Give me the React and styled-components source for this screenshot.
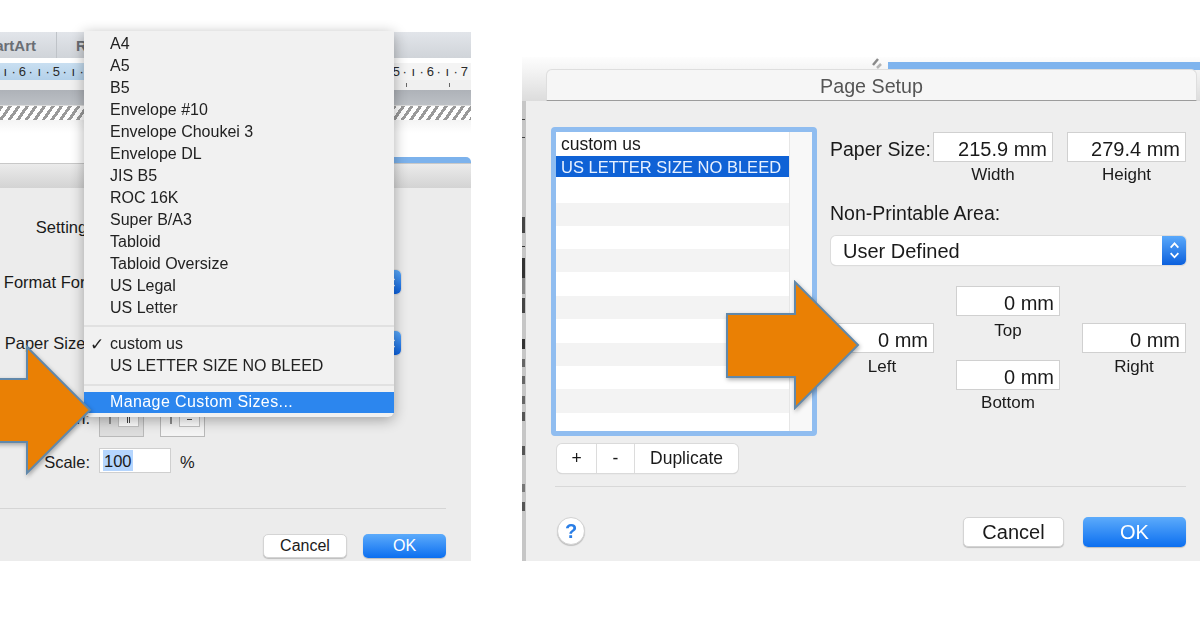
import React from 'react'
import styled, { createGlobalStyle, css } from 'styled-components'

const GlobalStyle = createGlobalStyle`
  html, body { margin: 0; padding: 0; background: #fff; }
  body { font-family: "Liberation Sans", Arial, sans-serif; color: #1a1a1a; }
  * { box-sizing: border-box; }
`

const paperSizes = ['A4', 'A5', 'B5', 'Envelope #10', 'Envelope Choukei 3', 'Envelope DL', 'JIS B5', 'ROC 16K', 'Super B/A3', 'Tabloid', 'Tabloid Oversize', 'US Legal', 'US Letter']
const listRows = [24, 21, 26, 23, 23, 23, 24, 23, 24, 23, 23, 24, 18]
// bits of the document peeking out behind the sheet: [gap above, height, colour]
const edgeMarks = [[18, 1, '#444'], [17, 1, '#444'], [79, 16, '#444'], [13, 1, '#333'], [11, 20, '#333'], [0, 16, '#888'], [4, 15, '#444'], [26, 10, '#333'], [10, 8, '#666'], [9, 8, '#666'], [12, 8, '#666'], [8, 9, '#555'], [25, 9, '#555'], [29, 8, '#777'], [10, 9, '#555']]

const softEdges = css`
  filter: blur(0.5px);
`

const Page = styled.div`
  display: flex;
  align-items: flex-start;
  width: 1200px;
  height: 630px;
  overflow: hidden;
  background: #fff;
`

const LeftShot = styled.section`
  ${softEdges}
  position: relative;
  display: flex;
  flex-direction: column;
  flex: none;
  width: 471px;
  height: 529px;
  margin-top: 32px;
`

const Toolbar = styled.div`
  display: flex;
  height: 26px;
  background: linear-gradient(#e2e5ea, #d0d4d9);
  color: #6a6e74;
  font-size: 15px;
  font-weight: 700;
`

const ToolTab = styled.div`
  display: flex;
  align-items: center;
  justify-content: ${p => p.$start ? 'flex-start' : 'flex-end'};
  flex: none;
  width: ${p => p.$w}px;
  padding: 0 ${p => p.$end || 0}px 0 ${p => p.$start || 0}px;
  white-space: nowrap;
  overflow: hidden;
  border-right: 1px solid #bfc3c8;
`

const Ruler = styled.div`
  display: flex;
  justify-content: space-between;
  height: 17px;
  margin-top: 5px;
  background: #f4f4f4;
`

const RulerPart = styled.div`
  display: flex;
  flex: none;
  align-items: center;
  width: ${p => p.$w}px;
  padding-left: ${p => p.$pad}px;
  background: ${p => p.$blue ? 'linear-gradient(#c9dff1, #b4d1ea)' : 'transparent'};
`

const RulerMark = styled.span`
  flex: none;
  width: 8.5px;
  text-align: center;
  font-size: 13px;
  color: #2a2a2a;
`

const TickRow = styled.div`
  display: flex;
  justify-content: flex-end;
  align-items: center;
  gap: 42px;
  height: 10px;
  padding-right: 21px;
  background: #f0f0f0;
`

const Tick = styled.span`
  width: 1px;
  height: 4px;
  background: #666;
`

const GreyBand = styled.div`
  height: 16px;
  background: linear-gradient(#aeb2b8, #bcc0c5);
  border-bottom: 1px solid #dcdcdc;
`

const Hatch = styled.div`
  height: 14px;
  background: repeating-linear-gradient(125deg, #9a9a9a 0 3px, #fff 3px 7px);
`

const WhiteGap = styled.div`
  display: flex;
  justify-content: flex-end;
  align-items: flex-end;
  height: 43px;
  background: linear-gradient(#f4f4f4, #fff 30%);
`

const BlueEdge = styled.div`
  width: 77px;
  height: 6px;
  background: #7cb2ec;
  border-top-right-radius: 5px;
`

const DialogHead = styled.div`
  height: 25px;
  background: linear-gradient(#ebebeb, #d3d3d3);
  border-top: 1px solid #c8c8c8;
`

const DialogBody = styled.div`
  flex: 1;
  padding-top: 27px;
  background: #ececec;
`

const FormRow = styled.div`
  display: flex;
  align-items: center;
  height: ${p => p.$h || 24}px;
  margin-top: ${p => p.$top || 0}px;
  font-size: 16.5px;
`

const RowLabel = styled.label`
  flex: none;
  width: ${p => p.$w || 90}px;
  margin-right: 9px;
  padding-top: ${p => p.$drop || 1}px;
  text-align: right;
  white-space: nowrap;
`

const OrientLabel = styled(RowLabel)`
  align-self: flex-start;
  margin-top: 3px;
`

const OrientButton = styled.div`
  display: flex;
  align-items: flex-start;
  gap: 7px;
  width: 45px;
  height: 32px;
  margin-right: 16px;
  padding-left: 9px;
  border: 1px solid #b9b9b9;
  background: ${p => p.$pressed ? '#dddddd' : '#f4f4f4'};
`

const PaperNub = styled.span`
  width: 2px;
  height: 7px;
  margin-top: 11px;
  background: #8d8d8d;
`

const PaperIcon = styled.span`
  display: flex;
  justify-content: center;
  align-items: flex-end;
  gap: 1px;
  width: 21px;
  height: 21px;
  padding-bottom: 3px;
  border: 1px solid #c2c2c2;
  border-top: 0;
  background: #fff;
`

const PaperLine = styled.span`
  width: ${p => p.$w}px;
  height: ${p => p.$h}px;
  margin-bottom: ${p => p.$up || 0}px;
  background: #444;
`

const ScaleInput = styled.div`
  display: flex;
  align-items: center;
  flex: none;
  width: 72px;
  height: 25px;
  padding-left: 3px;
  border: 1px solid #cfcfcf;
  background: #fff;
`

const Selected = styled.span`
  padding: 2px 1px 0;
  background: #b5d5fd;
`

const Unit = styled.span`
  margin-left: 9px;
  padding-top: 3px;
`

const LeftDivider = styled.div`
  height: 1px;
  margin: 35px 25px 0 0;
  background: #d5d5d5;
`

const DialogFooter = styled.div`
  display: flex;
  justify-content: flex-end;
  gap: ${p => p.$gap}px;
  margin-top: ${p => p.$top}px;
  padding-right: ${p => p.$pad}px;
`

const PushButton = styled.button`
  display: flex;
  align-items: center;
  justify-content: center;
  width: ${p => p.$w}px;
  height: ${p => p.$h}px;
  padding: 0;
  border-radius: 5px;
  border: ${p => p.$primary ? '0' : '1px solid #d4d4d4'};
  background: ${p => p.$primary ? 'linear-gradient(#5cabfb, #0c6ff0)' : '#fff'};
  color: ${p => p.$primary ? '#fff' : '#1a1a1a'};
  box-shadow: 0 1px 1px rgba(0, 0, 0, 0.2);
  font: inherit;
  font-size: ${p => p.$size}px;
`

const SelectBox = styled.div`
  display: flex;
  align-items: center;
  justify-content: space-between;
  flex: none;
  width: ${p => p.$w}px;
  height: ${p => p.$h}px;
  margin-left: ${p => p.$left || 0}px;
  padding-left: 12px;
  border-radius: 5px;
  background: #fff;
  box-shadow: 0 0 0 1px #dcdcdc, 0 1px 1px rgba(0, 0, 0, 0.15);
  font-size: 20px;
`

const SelectText = styled.span`
  padding-top: 2px;
`

const Stepper = styled.span`
  display: flex;
  align-items: center;
  justify-content: center;
  flex: none;
  width: ${p => p.$w}px;
  height: 100%;
  border-radius: 0 5px 5px 0;
  background: linear-gradient(#5aa9fb, #0b60dd);
`

const Menu = styled.div`
  position: absolute;
  top: -1px;
  left: 84px;
  width: 310px;
  padding: 2px 0 4px;
  border-radius: 0 0 6px 6px;
  background: #f1f1f1;
  box-shadow: 0 3px 14px rgba(0, 0, 0, 0.32);
  font-size: 16px;
`

const MenuItem = styled.div`
  display: flex;
  align-items: center;
  height: ${p => p.$h || 22}px;
  padding-left: ${p => p.$checked ? 6 : 26}px;
  background: ${p => p.$active ? '#2c86ee' : 'transparent'};
  color: ${p => p.$active ? '#fff' : '#222'};
  letter-spacing: ${p => p.$active ? 0.4 : 0}px;
  white-space: nowrap;
`

const ManageText = styled.span`
  margin-top: -2px;
`

const CheckMark = styled.span`
  flex: none;
  width: 20px;
  font-family: "DejaVu Sans", sans-serif;
  font-size: 17px;
`

const MenuSeparator = styled.div`
  height: 2px;
  margin: ${p => p.$before}px 0 ${p => p.$after}px;
  background: #e1e1e1;
`

const ArrowSvg = styled.svg`
  position: absolute;
  top: ${p => p.$top}px;
  left: ${p => p.$left}px;
  filter: drop-shadow(1px 2px 2px rgba(0, 0, 0, 0.3));
`

const RightShot = styled.section`
  ${softEdges}
  display: flex;
  flex-direction: column;
  position: relative;
  flex: none;
  width: 678px;
  height: 504px;
  margin: 57px 0 0 51px;
`

const TitleArea = styled.div`
  position: relative;
  flex: none;
  height: 44px;
  padding: 12px 3px 0 24px;
  background: linear-gradient(#fdfdfd, #f4f4f4 30%, #dcdcdc);
`

const BlueStrip = styled.div`
  position: absolute;
  top: 5px;
  left: 366px;
  right: 0;
  height: 8px;
  background: #7fb4ee;
`

const Curl = styled.svg`
  position: absolute;
  top: 1px;
  left: 350px;
`

const TitleBar = styled.div`
  position: relative;
  display: flex;
  align-items: center;
  justify-content: center;
  height: 32px;
  padding-top: 2px;
  border: 1px solid #dedede;
  border-bottom: 1px solid #9c9c9c;
  border-radius: 6px 6px 0 0;
  background: #f6f6f6;
  color: #555;
  font-size: 19.7px;
`

const SheetRow = styled.div`
  display: flex;
  flex: 1;
`

const EdgeStrip = styled.div`
  display: flex;
  flex-direction: column;
  flex: none;
  width: 4px;
  background: #c6c6c6;
`

const EdgeMark = styled.span`
  width: 3px;
  height: ${p => p.$h}px;
  margin-top: ${p => p.$gap}px;
  background: ${p => p.$color};
`

const Sheet = styled.div`
  flex: 1;
  display: flex;
  flex-direction: column;
  padding: 26px 14px 14px 25px;
  background: #eeeeee;
`

const Upper = styled.div`
  display: flex;
  gap: 13px;
`

const ListColumn = styled.div`
  flex: none;
  width: 266px;
`

const ListFrame = styled.div`
  display: flex;
  height: 309px;
  border: 5px solid #90bdf0;
  border-radius: 4px;
  background: #fff;
`

const ListRows = styled.div`
  flex: none;
  display: flex;
  flex-direction: column;
  width: 233px;
`

const ListRow = styled.div`
  display: flex;
  align-items: center;
  height: ${p => p.$h}px;
  padding: ${p => p.$selected ? 2 : 0}px 0 0 5px;
  background: ${p => p.$selected ? '#0f62d6' : p.$striped ? '#f3f3f3' : '#fff'};
  color: ${p => p.$selected ? '#e8f1ff' : '#1a1a1a'};
  font-size: ${p => p.$selected ? 16.5 : 17.5}px;
  white-space: nowrap;
`

const ScrollTrack = styled.div`
  flex: 1;
  border-left: 1px solid #e6e6e6;
  background: #f8f8f8;
`

const Segmented = styled.div`
  display: flex;
  width: 181px;
  height: 29px;
  margin: 8px 0 0 6px;
  border-radius: 5px;
  background: #fff;
  box-shadow: 0 0 0 1px #dadada, 0 1px 1px rgba(0, 0, 0, 0.2);
  font-size: 17.5px;
`

const Segment = styled.div`
  display: flex;
  align-items: center;
  justify-content: center;
  width: ${p => p.$w}px;
  border-right: ${p => p.$last ? '0' : '1px solid #dcdcdc'};
`

const SetupForm = styled.div`
  flex: none;
  width: 356px;
  padding-top: 5px;
`

const PaperRow = styled.div`
  display: flex;
  gap: 14px;
`

const PaperLabel = styled.div`
  flex: none;
  width: 103px;
  height: 30px;
  margin-right: -14px;
  line-height: 34px;
  font-size: 19.5px;
  white-space: nowrap;
`

const FieldColumn = styled.div`
  flex: none;
  width: ${p => p.$w}px;
  padding-top: ${p => p.$top || 0}px;
`

const ValueField = styled.div`
  height: 30px;
  margin-top: ${p => p.$top || 0}px;
  padding-right: 5px;
  border: 1px solid #d0d0d0;
  background: #fff;
  text-align: right;
  line-height: 32px;
  font-size: 20px;
`

const Caption = styled.div`
  height: ${p => p.$h || 24}px;
  line-height: ${p => (p.$h || 24) + 2}px;
  text-align: center;
  font-size: 17px;
`

const SectionLabel = styled.div`
  height: 22px;
  margin: 16px 0 12px;
  line-height: 22px;
  font-size: 19.5px;
`

const MarginGrid = styled.div`
  display: flex;
  gap: 22px;
  margin-top: 21px;
`

const SheetDivider = styled.div`
  height: 1px;
  margin: 13px 0 0 4px;
  background: #d8d8d8;
`

const FooterRow = styled.div`
  display: flex;
  justify-content: space-between;
  margin: 30px 0 0 6px;
`

const HelpButton = styled.div`
  display: flex;
  align-items: center;
  justify-content: center;
  width: 28px;
  height: 28px;
  border-radius: 50%;
  border: 1px solid #d2d2d2;
  background: #fff;
  box-shadow: 0 1px 1px rgba(0, 0, 0, 0.2);
  color: #2a7ee6;
  font-size: 20px;
  font-weight: 700;
`

const FooterButtons = styled.div`
  display: flex;
  gap: 19px;
`

function StepperChevrons({ size }) {
  return (
    <svg width={size} height={size * 1.7} viewBox="0 0 10 17" fill="none" stroke="#fff" strokeWidth="1.6">
      <path d="M1.5 6 5 2.2 8.5 6" />
      <path d="M1.5 11 5 14.8 8.5 11" />
    </svg>
  )
}

function Arrow({ top, left }) {
  return (
    <ArrowSvg $top={top} $left={left} width="135" height="130" viewBox="-2 -2 135 130">
      <path d="M0 32H68V0L131 63 68 126V95H0Z" fill="#ea8004" stroke="#6188aa" strokeWidth="2" />
    </ArrowSvg>
  )
}

function LeftPanel() {
  return (
    <LeftShot>
      <Toolbar>
        <ToolTab $w={57} $end={20}>SmartArt</ToolTab>
        <ToolTab $w={90} $start={19}>Review</ToolTab>
      </Toolbar>
      <Ruler>
        <RulerPart $blue $w={84} $pad={1}>
          {['ı', '·', '6', '·', 'ı', '·', '5', '·', 'ı', '·'].map((m, i) => <RulerMark key={i}>{m}</RulerMark>)}
        </RulerPart>
        <RulerPart $w={79} $pad={0}>
          {['5', '·', 'ı', '·', '6', '·', 'ı', '·', '7'].map((m, i) => <RulerMark key={i}>{m}</RulerMark>)}
        </RulerPart>
      </Ruler>
      <TickRow><Tick /><Tick /></TickRow>
      <GreyBand />
      <Hatch />
      <WhiteGap><BlueEdge /></WhiteGap>
      <DialogHead />
      <DialogBody>
        <FormRow><RowLabel $w={100}>Settings:</RowLabel></FormRow>
        <FormRow $top={31}>
          <RowLabel>Format For:</RowLabel>
          <SelectBox $w={302} $h={24}><span /><Stepper $w={20}><StepperChevrons size={10} /></Stepper></SelectBox>
        </FormRow>
        <FormRow $top={37}>
          <RowLabel>Paper Size:</RowLabel>
          <SelectBox $w={302} $h={24}><span /><Stepper $w={20}><StepperChevrons size={10} /></Stepper></SelectBox>
        </FormRow>
        <FormRow $top={50} $h={32}>
          <OrientLabel>Orientation:</OrientLabel>
          <OrientButton $pressed>
            <PaperNub />
            <PaperIcon><PaperLine $w={1} $h={7} /><PaperLine $w={1} $h={7} /></PaperIcon>
          </OrientButton>
          <OrientButton>
            <PaperNub />
            <PaperIcon><PaperLine $w={5} $h={1} $up={3} /></PaperIcon>
          </OrientButton>
        </FormRow>
        <FormRow $top={11} $h={25}>
          <RowLabel $drop={3}>Scale:</RowLabel>
          <ScaleInput><Selected>100</Selected></ScaleInput>
          <Unit>%</Unit>
        </FormRow>
        <LeftDivider />
        <DialogFooter $gap={16} $top={25} $pad={25}>
          <PushButton $w={84} $h={24} $size={16}>Cancel</PushButton>
          <PushButton $primary $w={83} $h={24} $size={16}>OK</PushButton>
        </DialogFooter>
      </DialogBody>

      <Menu>
        {paperSizes.map(size => <MenuItem key={size}>{size}</MenuItem>)}
        <MenuSeparator $before={6} $after={6} />
        <MenuItem $checked><CheckMark>✓</CheckMark>custom us</MenuItem>
        <MenuItem>US LETTER SIZE NO BLEED</MenuItem>
        <MenuSeparator $before={7} $after={6} />
        <MenuItem $active $h={21}><ManageText>Manage Custom Sizes...</ManageText></MenuItem>
      </Menu>
      <Arrow top={313} left={-43} />
    </LeftShot>
  )
}

function RightPanel() {
  return (
    <RightShot>
      <TitleArea>
        <BlueStrip />
        <Curl width="12" height="12" viewBox="0 0 12 12" fill="none">
          <path d="M1 7 6 1" stroke="#8a8a8a" strokeWidth="2.5" />
          <path d="M5 10 9 6" stroke="#b5b5b5" strokeWidth="2.5" />
        </Curl>
        <TitleBar>Page Setup</TitleBar>
      </TitleArea>
      <SheetRow>
        <EdgeStrip>
          {edgeMarks.map(([gap, h, color], i) => <EdgeMark key={i} $gap={gap} $h={h} $color={color} />)}
        </EdgeStrip>
        <Sheet>
          <Upper>
            <ListColumn>
              <ListFrame>
                <ListRows>
                  {listRows.map((h, i) => (
                    <ListRow key={i} $h={h} $selected={i === 1} $striped={i > 2 && i % 2 === 1}>
                      {i === 0 && 'custom us'}
                      {i === 1 && 'US LETTER SIZE NO BLEED'}
                    </ListRow>
                  ))}
                </ListRows>
                <ScrollTrack />
              </ListFrame>
              <Segmented>
                <Segment $w={40}>+</Segment>
                <Segment $w={38}>-</Segment>
                <Segment $w={103} $last>Duplicate</Segment>
              </Segmented>
            </ListColumn>
            <SetupForm>
              <PaperRow>
                <PaperLabel>Paper Size:</PaperLabel>
                <FieldColumn $w={120}>
                  <ValueField>215.9 mm</ValueField>
                  <Caption>Width</Caption>
                </FieldColumn>
                <FieldColumn $w={119}>
                  <ValueField>279.4 mm</ValueField>
                  <Caption>Height</Caption>
                </FieldColumn>
              </PaperRow>
              <SectionLabel>Non-Printable Area:</SectionLabel>
              <SelectBox $w={355} $h={29} $left={1}>
                <SelectText>User Defined</SelectText>
                <Stepper $w={24}><StepperChevrons size={11} /></Stepper>
              </SelectBox>
              <MarginGrid>
                <FieldColumn $w={104} $top={37}>
                  <ValueField>0 mm</ValueField>
                  <Caption $h={26}>Left</Caption>
                </FieldColumn>
                <FieldColumn $w={104}>
                  <ValueField>0 mm</ValueField>
                  <Caption $h={28}>Top</Caption>
                  <ValueField $top={16}>0 mm</ValueField>
                  <Caption>Bottom</Caption>
                </FieldColumn>
                <FieldColumn $w={104} $top={37}>
                  <ValueField>0 mm</ValueField>
                  <Caption $h={26}>Right</Caption>
                </FieldColumn>
              </MarginGrid>
            </SetupForm>
          </Upper>
          <SheetDivider />
          <FooterRow>
            <HelpButton>?</HelpButton>
            <FooterButtons>
              <PushButton $w={101} $h={30} $size={20}>Cancel</PushButton>
              <PushButton $primary $w={103} $h={30} $size={20}>OK</PushButton>
            </FooterButtons>
          </FooterRow>
        </Sheet>
      </SheetRow>
      <Arrow top={223} left={203} />
    </RightShot>
  )
}

export default function App() {
  return (
    <Page>
      <GlobalStyle />
      <LeftPanel />
      <RightPanel />
    </Page>
  )
}
